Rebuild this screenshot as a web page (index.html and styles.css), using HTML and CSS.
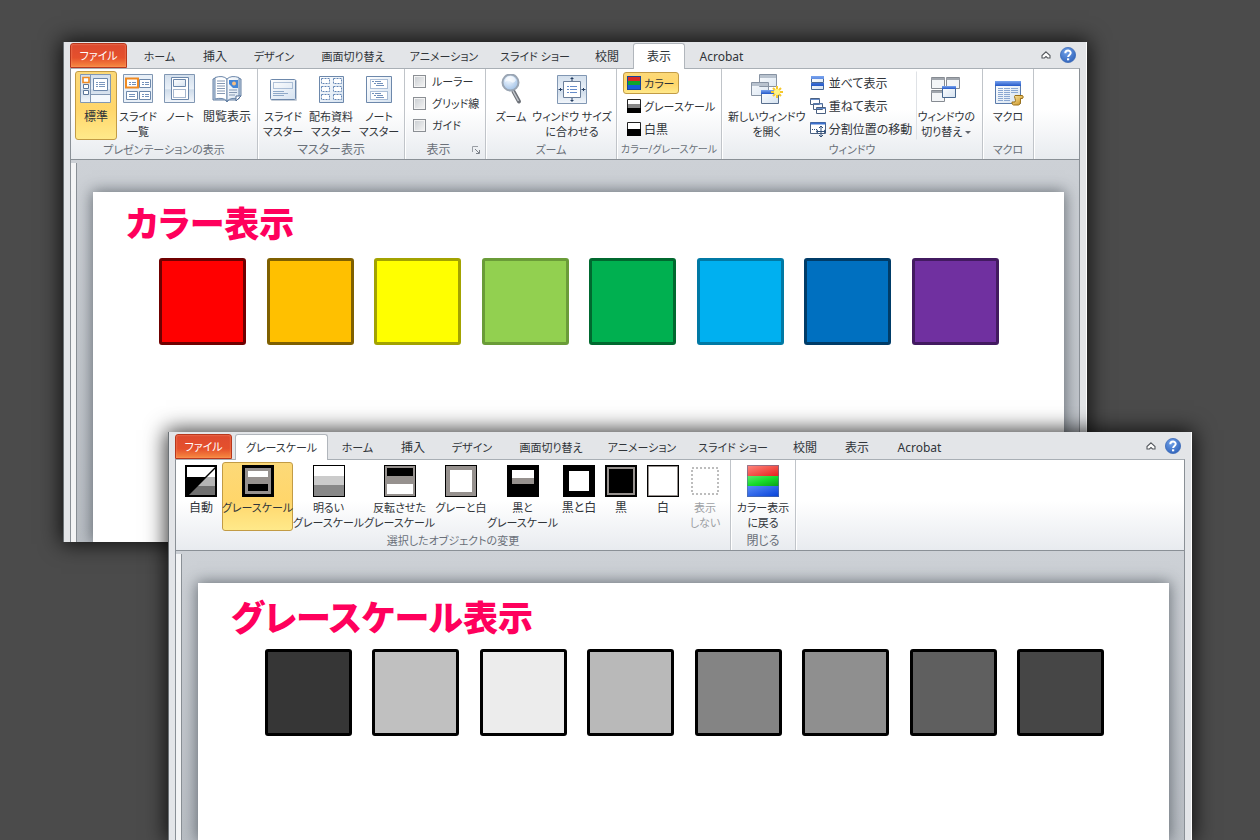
FILE: index.html
```html
<!DOCTYPE html>
<html lang="ja">
<head>
<meta charset="utf-8">
<title>カラー表示とグレースケール表示</title>
<link rel="stylesheet" href="styles.css">
</head>
<body>
<svg class="defs" aria-hidden="true">
  <defs>
    <linearGradient id="pane" x1="0" y1="0" x2="0" y2="1"><stop offset="0" stop-color="#d3dfec"/><stop offset=".5" stop-color="#e9f0f8"/><stop offset=".55" stop-color="#cfdcea"/><stop offset="1" stop-color="#f2f6fb"/></linearGradient>
    <linearGradient id="paper" x1="0" y1="0" x2="1" y2="1"><stop offset="0" stop-color="#fff"/><stop offset="1" stop-color="#d5e2f0"/></linearGradient>
    <linearGradient id="bar" x1="0" y1="0" x2="0" y2="1"><stop offset="0" stop-color="#79a3ee"/><stop offset="1" stop-color="#2358c8"/></linearGradient>
    <linearGradient id="r" x1="0" y1="0" x2="1" y2="1"><stop offset="0" stop-color="#ff8a80"/><stop offset="1" stop-color="#e8201c"/></linearGradient>
    <linearGradient id="g" x1="0" y1="0" x2="1" y2="1"><stop offset="0" stop-color="#5fe870"/><stop offset=".5" stop-color="#18dc2c"/><stop offset="1" stop-color="#0aa018"/></linearGradient>
    <linearGradient id="b" x1="0" y1="0" x2="1" y2="1"><stop offset="0" stop-color="#5a8cf8"/><stop offset="1" stop-color="#0440d8"/></linearGradient>
    <linearGradient id="gold" x1="0" y1="0" x2="1" y2="1"><stop offset="0" stop-color="#fbe9a8"/><stop offset="1" stop-color="#c98f1c"/></linearGradient>
    <radialGradient id="lens" cx=".4" cy=".35" r=".7"><stop offset="0" stop-color="#f2f8ff"/><stop offset="1" stop-color="#9dbfe6"/></radialGradient>
    <radialGradient id="ball" cx=".4" cy=".3" r=".8"><stop offset="0" stop-color="#6fa0e8"/><stop offset="1" stop-color="#2c5fb8"/></radialGradient>
    <symbol id="help" viewBox="0 0 16 16"><circle cx="8" cy="8" r="7.6" fill="url(#ball)" stroke="#3e6cb8" stroke-width=".8"/><path d="M5.3 6.2C5.3 2.6 10.8 2.8 10.7 6 10.6 7.9 8.1 8 8.1 10" fill="none" stroke="#fff" stroke-width="2"/><path d="M7 11.3h2.2v2H7z" fill="#fff"/></symbol>
    <symbol id="collapse" viewBox="0 0 10 8"><path d="M5 .8 9 4.5V7H6.6L5 5.5 3.4 7H1V4.5z" fill="#fff" stroke="#55595e" stroke-width="1.1"/></symbol>
  </defs>
</svg>
<main class="desktop">
  <section class="window window-color" aria-label="カラー表示">
    <header class="tabbar">
      <nav class="tabs">
        <button class="tab kana file">ファイル</button>
        <button class="tab kana w-home">ホーム</button>
        <button class="tab w-short">挿入</button>
        <button class="tab kana w-design">デザイン</button>
        <button class="tab kana w-long">画面切り替え</button>
        <button class="tab kana w-anim">アニメーション</button>
        <button class="tab kana w-long">スライド ショー</button>
        <button class="tab w-short">校閲</button>
        <button class="tab w-short active">表示</button>
        <button class="tab w-acro">Acrobat</button>
      </nav>
      <div class="tools">
        <button class="tool" aria-label="リボンの最小化"><svg width="10" height="8"><use href="#collapse"/></svg></button>
        <button class="tool" aria-label="ヘルプ"><svg width="16" height="16"><use href="#help"/></svg></button>
      </div>
    </header>
    <div class="ribbon">
      <div class="group g-pres">
        <div class="body">
          <button class="big b-42 on">
            <svg width="32" height="32" viewBox="0 0 32 32"><path d="M.5.5h30v28H.5z" fill="url(#pane)" stroke="#8197b3"/><path d="M10.500 1v28M10.500 20.500H31" stroke="#8197b3"/><path d="M11 21h19v7H11z" fill="#f4f8fc"/><path d="M13.500 4.500h14v12h-14z" fill="#fff" stroke="#6d88ab"/><path d="M16 8.500h2M19 8.500h6M16 10.500h2M19 10.500h6M16 12.500h2M19 12.500h6" stroke="#7c98be"/><path d="M3 3.500h6v5H3z" fill="#fff" stroke="#ef8a22" stroke-width="1.600"/><path d="M3.500 10.500h5v4h-5zM3.500 16.500h5v4h-5z" fill="#fff" stroke="#5d7698"/></svg>
            <span>標準</span></button>
          <button class="big b-42">
            <svg width="32" height="32" viewBox="0 0 32 32"><path d="M1.500.500h29v28h-29z" fill="#e9f0f8" stroke="#8197b3"/><path d="M17.500 5.500h11v8h-11zM4.500 17.500h11v8h-11zM17.500 17.500h11v8h-11z" fill="#fff" stroke="#6d88ab"/><path d="M4 4.500h12v9H4z" fill="#fff" stroke="#ef8a22" stroke-width="2"/><path d="M7 8.500h2M10 8.500h4M7 10.500h2M10 10.500h4M20 8.500h2M23 8.500h4M20 10.500h2M23 10.500h4M7 20.500h6M7 22.500h6M20 20.500h2M23 20.500h4M20 22.500h2M23 22.500h4" stroke="#7391bb"/></svg>
            <span class="kana">スライド<br>一覧</span></button>
          <button class="big b-42">
            <svg width="32" height="32" viewBox="0 0 32 32"><path d="M.5.500h30v28H.5z" fill="url(#pane)" stroke="#8197b3"/><path d="M7.500 3.500h17v22h-17z" fill="#fff" stroke="#6d88ab"/><path d="M9.500 5.500h12v7h-12z" fill="url(#paper)" stroke="#6d88ab"/><path d="M9.500 15.500h12v8h-12z" fill="none" stroke="#4c6f9d" stroke-dasharray="1 1"/></svg>
            <span class="kana">ノート</span></button>
          <button class="big b-52">
            <svg width="32" height="32" viewBox="0 0 32 32"><path d="M2 5v21h12l2 2 2-2h8l4-4V5l-3-1H18l-2 2-2-2H5z" fill="#c1d1e4" stroke="#6680a2"/><path d="M4 3.500Q12 1 16 5v22Q12 23 4 25z" fill="#fff" stroke="#6d88ab"/><path d="M28 3.500Q20 1 16 5v22Q20 23 28 25z" fill="url(#paper)" stroke="#6d88ab"/><path d="M6 7h8M6 9.500h8M6 12h8M6 14.500h8M6 17h8M6 19.500h8M18 16h8M18 18.500h8M18 21h6" stroke="#8598b3"/><path d="M18 6h9v8h-9z" fill="#4385d6"/><circle cx="23" cy="9.500" r="2" fill="#f5be83"/><path d="M18 14v-4l4 4z" fill="#e7f2fb"/><path d="M25 27v-5h5z" fill="#fff" stroke="#536f96"/></svg>
            <span>閲覧表示</span></button>
        </div>
        <h3 class="kana">プレゼンテーションの表示</h3>
      </div>
      <div class="group g-master">
        <div class="body">
          <button class="big b-48">
            <svg width="32" height="32" viewBox="0 0 32 32"><rect x="4" y="6" width="26" height="21" rx="1" fill="#c6ced8"/><rect x="3.500" y="5.500" width="25" height="20" rx="1" fill="url(#paper)" stroke="#6d88ab"/><path d="M6.500 8.500h19v6h-19z" fill="none" stroke="#6a8ab5" stroke-dasharray="1 1"/><path d="M6 17.500h11M6 19.500h15M6 21.500h11" stroke="#8fa9c8"/></svg>
            <span class="kana">スライド<br>マスター</span></button>
          <button class="big b-48">
            <svg width="32" height="32" viewBox="0 0 32 32"><path d="M4.500 2.500h24v26h-24z" fill="url(#paper)" stroke="#6d88ab"/><path d="M6.500 4.500h8v5h-8zM18.500 4.500h8v5h-8zM6.500 12.500h8v5h-8zM18.500 12.500h8v5h-8zM6.500 20.500h8v5h-8zM18.500 20.500h8v5h-8z" fill="#fff" stroke="#6486b5" stroke-dasharray="2 1"/></svg>
            <span class="kana">配布資料<br>マスター</span></button>
          <button class="big b-48">
            <svg width="32" height="32" viewBox="0 0 32 32"><path d="M3.500 2.500h25v26h-25z" fill="url(#paper)" stroke="#6d88ab"/><path d="M7.500 5.500h17v9h-17zM7.500 17.500h17v8h-17z" fill="#fff" stroke="#6486b5" stroke-dasharray="1 1"/><path d="M9 7.500h2M12 7.500h6M11 9.500h2M14 9.500h6M13 11.500h8M9 19.500h2M12 19.500h6M11 21.500h2M14 21.500h6M13 23.500h8" stroke="#7391bb"/></svg>
            <span class="kana">ノート<br>マスター</span></button>
        </div>
        <h3>マスター表示</h3>
      </div>
      <div class="group g-show">
        <div class="body checks">
          <label class="kana"><input type="checkbox">ルーラー</label>
          <label class="kana"><input type="checkbox">グリッド線</label>
          <label class="kana"><input type="checkbox">ガイド</label>
        </div>
        <div class="foot"><h3>表示</h3>
          <button class="tool" aria-label="表示のオプション"><svg width="8" height="8" viewBox="0 0 8 8"><path d="M.5 6V.5H6" fill="none" stroke="#9a9ea5"/><path d="M3 3l4 4M7.500 4v3.500H4" fill="none" stroke="#7b8088"/></svg></button></div>
      </div>
      <div class="group g-zoom">
        <div class="body">
          <button class="big b-42">
            <svg width="32" height="32" viewBox="0 0 32 32"><path d="M18.500 17.500l5.500 10" stroke="#6d7178" stroke-width="4" stroke-linecap="round"/><path d="M18 17l5.500 10" stroke="#c2c6cc" stroke-width="1.500"/><circle cx="15.500" cy="8.500" r="8" fill="url(#lens)" stroke="#9aa5b3" stroke-width="2"/><path d="M10 8q4-3 6 0 3 2 5-2-2-4-6-4-5 1-5 6z" fill="#fff" opacity=".65"/></svg>
            <span class="kana">ズーム</span></button>
          <button class="big b-80">
            <svg width="32" height="32" viewBox="0 0 32 32"><path d="M1.500 1.500h29v28h-29z" fill="url(#pane)" stroke="#8197b3"/><path d="M7.500 7.500h17v16h-17z" fill="#fff" stroke="#6b7f9a"/><path d="M11 12.500h2M14 12.500h7M11 15.500h2M14 15.500h7M11 18.500h2M14 18.500h7" stroke="#668cca"/><path d="M16 3v4M14.500 4.500h3M16 24v4M14.500 26.500h3M2.500 15.500h4M4.500 14v3M25.500 15.500h4M27.500 14v3" stroke="#263f62"/></svg>
            <span class="kana">ウィンドウ サイズ<br>に合わせる</span></button>
        </div>
        <h3 class="kana">ズーム</h3>
      </div>
      <div class="group g-color">
        <div class="body list">
          <button class="small kana on"><svg width="14" height="14"><path d="M0 0h14v14H0z" fill="#16459b"/><path d="M1 1h12v4H1z" fill="#d92b25"/><path d="M1 5h12v4H1z" fill="#10a52d"/><path d="M1 9h12v4H1z" fill="#165dda"/></svg>カラー</button>
          <button class="small kana"><svg width="14" height="14"><path d="M.5.500h13v13H.5z" fill="#fff" stroke="#222"/><path d="M1 5h12v4H1z" fill="#888"/><path d="M0 9h14v5H0z"/></svg>グレースケール</button>
          <button class="small"><svg width="14" height="14"><path d="M.5.500h13v13H.5z" fill="#fff" stroke="#222"/><path d="M0 7h14v7H0z"/></svg>白黒</button>
        </div>
        <h3 class="tight">カラー/グレースケール</h3>
      </div>
      <div class="group g-window">
        <div class="body">
          <button class="big b-78">
            <svg width="32" height="32" viewBox="0 0 32 32"><path d="M8.500.500h17v12h-17zM.5 8.500h17v13H.5z" fill="url(#paper)" stroke="#8793a3"/><path d="M9 1h16v3H9zM1 9h16v3H1z" fill="#b8c2ce"/><path d="M10.500 16.500h17v13h-17z" fill="url(#paper)" stroke="#596f8e"/><path d="M10 16h18v4H10z" fill="url(#bar)"/><path d="M26 12v12M20 18h12M22 14l8 8M30 14l-8 8" stroke="#f5c82c" stroke-width="2"/><circle cx="26" cy="18" r="3" fill="#fff48a"/></svg>
            <span class="kana">新しいウィンドウ<br>を開く</span></button>
          <div class="list">
            <button class="small"><svg width="16" height="16"><path d="M1.500 1.500h12v6h-12zM1.500 8.500h12v6h-12z" fill="url(#paper)" stroke="#496894"/><path d="M1 1h13v3H1zM1 8h13v3H1z" fill="url(#bar)"/></svg>並べて表示</button>
            <button class="small"><svg width="16" height="16"><path d="M.5.500h9v6h-9zM3.500 5.500h9v6h-9zM6.500 9.500h9v6h-9z" fill="#fff" stroke="#4a6081"/><path d="M.5 1.500h9M3.500 6h9M6.500 10.500h9" stroke="#668ecd"/></svg>重ねて表示</button>
            <button class="small"><svg width="16" height="16"><path d="M.5 1.500h15v11H.5z" fill="#fff" stroke="#4a6081"/><path d="M.5 2.500h15" stroke="#3b70cf" stroke-width="2"/><path d="M2 8.500h6" stroke="#304f78" stroke-dasharray="1 1"/><path d="M11 5v11M7 10.500h9M9 7l2-2 2 2M9 14l2 2 2-2M8 9l-2 1.500L8 12M14 9l2 1.500-2 1.500" fill="none" stroke="#304f78"/></svg>分割位置の移動</button>
          </div>
          <button class="big b-60 split">
            <svg width="32" height="32" viewBox="0 0 32 32"><path d="M1.500 3.500h13v11h-13zM16.500 3.500h13v11h-13zM1.500 16.500h13v11h-13z" fill="#f3f5f7" stroke="#868b92"/><path d="M1.500 5h13M16.500 5h13M1.500 18h13" stroke="#a1a6ad" stroke-width="2"/><path d="M12.500 12.500h13v11h-13z" fill="url(#paper)" stroke="#48688f"/><path d="M12 12h14v3H12z" fill="url(#bar)"/></svg>
            <span class="kana">ウィンドウの<br>切り替え<i class="caret"></i></span></button>
        </div>
        <h3 class="kana">ウィンドウ</h3>
      </div>
      <div class="group g-macro">
        <div class="body">
          <button class="big b-48">
            <svg width="32" height="32" viewBox="0 0 32 32"><path d="M3.500 7.500h25v22h-25z" fill="url(#paper)" stroke="#5a7bab"/><path d="M3 7h26v5H3z" fill="url(#bar)"/><path d="M6 14.500h5M12 14.500h6M19 14.500h7M6 16.500h5M12 16.500h6M19 16.500h7M6 18.500h5M12 18.500h6M19 18.500h7M6 20.500h5M12 20.500h6M6 22.500h5M12 22.500h6M6 24.500h5M12 24.500h6M6 26.500h5M12 26.500h6" stroke="#8ba8d2"/><path d="M23 21.500h7.500q1.500 1.500 0 3H28.500v2.500q.5 3.500-2 4h-5q-2-.5-1.500-3h3q1-1.500 0-3.500-1-2.500 0-3z" fill="url(#gold)" stroke="#9a7018"/></svg>
            <span class="kana">マクロ</span></button>
        </div>
        <h3 class="kana">マクロ</h3>
      </div>
    </div>
    <div class="workspace">
      <article class="slide">
        <h2>カラー表示</h2>
        <div class="swatches">
          <div class="swatch red"></div><div class="swatch orange"></div><div class="swatch yellow"></div><div class="swatch lime"></div><div class="swatch green"></div><div class="swatch sky"></div><div class="swatch blue"></div><div class="swatch purple"></div>
        </div>
      </article>
    </div>
  </section>

  <section class="window window-gray" aria-label="グレースケール表示">
    <header class="tabbar">
      <nav class="tabs">
        <button class="tab kana file">ファイル</button>
        <button class="tab kana w-gray active">グレースケール</button>
        <button class="tab kana w-home">ホーム</button>
        <button class="tab w-short">挿入</button>
        <button class="tab kana w-design">デザイン</button>
        <button class="tab kana w-long">画面切り替え</button>
        <button class="tab kana w-anim">アニメーション</button>
        <button class="tab kana w-long">スライド ショー</button>
        <button class="tab w-short">校閲</button>
        <button class="tab w-short">表示</button>
        <button class="tab w-acro">Acrobat</button>
      </nav>
      <div class="tools">
        <button class="tool" aria-label="リボンの最小化"><svg width="10" height="8"><use href="#collapse"/></svg></button>
        <button class="tool" aria-label="ヘルプ"><svg width="16" height="16"><use href="#help"/></svg></button>
      </div>
    </header>
    <div class="ribbon">
      <div class="group g-change">
        <div class="body">
          <button class="big b-42"><svg width="32" height="32"><path d="M0 0h32v32H0z"/><path d="M2 2h28L20 12H2z" fill="#fff"/><path d="M30 4v8h-8z" fill="#fff"/><path d="M22 12h8v9H13z" fill="#b5b5b5"/><path d="M13 21h17v9H4z" fill="#707070"/></svg><span>自動</span></button>
          <button class="big b-71 on"><svg width="32" height="32"><path d="M0 0h32v32H0z"/><path d="M3 3h26v26H3z" fill="#96918e"/><path d="M6 6h20v6H6z" fill="#fff"/><path d="M6 19h20v7H6z"/></svg><span class="kana">グレースケール</span></button>
          <button class="big b-71"><svg width="32" height="32"><path d="M0 0h32v32H0z"/><path d="M1 1h30v10H1z" fill="#fff"/><path d="M1 11h30v9H1z" fill="#cbcbcb"/><path d="M1 20h30v11H1z" fill="#888"/></svg><span class="kana">明るい<br>グレースケール</span></button>
          <button class="big b-71"><svg width="32" height="32"><path d="M0 0h32v32H0z"/><path d="M1 1h30v30H1z" fill="#96918e"/><path d="M3 3h26v8H3z"/><path d="M3 19h26v10H3z" fill="#fff"/></svg><span class="kana">反転させた<br>グレースケール</span></button>
          <button class="big b-52"><svg width="32" height="32"><path d="M0 0h32v32H0z"/><path d="M1 1h30v30H1z" fill="#96918e"/><path d="M5 5h22v22H5z" fill="#fff"/></svg><span class="kana">グレーと白</span></button>
          <button class="big b-71"><svg width="32" height="32"><path d="M0 0h32v32H0z"/><path d="M5 5h22v8H5z" fill="#fff"/><path d="M5 13h22v6H5z" fill="#96918e"/></svg><span class="kana">黒と<br>グレースケール</span></button>
          <button class="big b-42"><svg width="32" height="32"><path d="M0 0h32v32H0z"/><path d="M6 6h20v20H6z" fill="#fff"/></svg><span>黒と白</span></button>
          <button class="big b-42"><svg width="32" height="32"><path d="M0 0h32v32H0z"/><path d="M3 3h26v26H3z" fill="none" stroke="#96918e" stroke-width="2"/></svg><span>黒</span></button>
          <button class="big b-42"><svg width="32" height="32"><path d="M0 0h32v32H0z"/><path d="M1.500 1.500h29v29h-29z" fill="#fff" stroke="#96918e"/></svg><span>白</span></button>
          <button class="big b-42" disabled><svg width="32" height="32"><path d="M3 3h26v26H3z" fill="#fff" stroke="#bdbdbd" stroke-width="2" stroke-dasharray="2"/></svg><span class="kana">表示<br>しない</span></button>
        </div>
        <h3 class="kana">選択したオブジェクトの変更</h3>
      </div>
      <div class="group g-close">
        <div class="body">
          <button class="big b-60"><svg width="32" height="32"><path d="M0 0h32v11H0z" fill="url(#r)"/><path d="M0 11h32v10H0z" fill="url(#g)"/><path d="M0 21h32v11H0z" fill="url(#b)"/><path d="M.5.500h31v31H.5z" fill="none" stroke="#576e97" opacity=".6"/></svg><span class="kana">カラー表示<br>に戻る</span></button>
        </div>
        <h3>閉じる</h3>
      </div>
    </div>
    <div class="workspace">
      <article class="slide">
        <h2>グレースケール表示</h2>
        <div class="swatches">
          <div class="swatch k1"></div><div class="swatch k2"></div><div class="swatch k3"></div><div class="swatch k4"></div><div class="swatch k5"></div><div class="swatch k6"></div><div class="swatch k7"></div><div class="swatch k8"></div>
        </div>
      </article>
    </div>
  </section>
</main>
</body>
</html>
```
FILE: styles.css
```css
* { box-sizing: border-box; }
body {
  margin: 0;
  background: #4b4b4b;
  color: #303439;
  font: 12px/15px "Noto Sans", "Noto Sans CJK JP", sans-serif;
  font-feature-settings: "palt";
}
button { font: inherit; font-feature-settings: inherit; color: inherit; background: none; border: 0; padding: 0; }
h2, h3 { margin: 0; }
svg { display: block; flex: none; }
.defs { position: absolute; width: 0; height: 0; }

.desktop { position: relative; height: 100vh; overflow: hidden; }
.window {
  position: absolute;
  display: flex;
  flex-direction: column;
  padding: 0 6px;
  background: #e3e5e8;
  border-left: 1px solid #6c7276;
  border-right: 1px solid #fff;
  box-shadow: 0 0 20px 2px rgba(0, 0, 0, .8);
}
.window-color { top: 42px; left: 63px; right: 173px; height: 500px; }
.window-gray { top: 432px; left: 168px; right: 68px; bottom: 0; }

.tabbar { display: flex; justify-content: space-between; height: 27px; }
.window-color .tabbar { height: 26px; }
.tabs { display: flex; align-items: flex-end; }
.tab { height: 25px; white-space: nowrap; border: 1px solid transparent; border-bottom: 0; flex: none; }
.tab.active { background: #fff; border-color: #b1b6bc; border-radius: 3px 3px 0 0; height: 26px; margin-bottom: -1px; position: relative; z-index: 1; }
.tab.file {
  width: 57px;
  margin-right: 3px;
  color: #fff;
  border: 1px solid #b7371c;
  border-radius: 3px 3px 0 0;
  background: linear-gradient(#dd4a30, #e5502c 60%, #f78a40);
  box-shadow: inset 0 0 2px #ff9b78;
}
.w-home { width: 59px; }
.w-short { width: 52px; }
.w-design { width: 66px; }
.w-long { width: 92px; }
.w-anim { width: 90px; }
.w-acro { width: 73px; }
.w-gray { width: 93px; }
.tools { display: flex; align-items: center; gap: 9px; padding-right: 4px; }

.ribbon {
  display: flex;
  height: 92px;
  flex: none;
  border: 1px solid #8a9096;
  border-top-color: #a9afb5;
  background: linear-gradient(#fff 45%, #e8ebef);
}
.group { display: flex; flex-direction: column; flex: none; border-right: 1px solid #c0c4c9; box-shadow: 1px 0 #fff; }
.group h3 { font-size: 12px; font-weight: 400; line-height: 19px; color: #6a7079; text-align: center; white-space: nowrap; }
.kana, .group h3.kana { font-size: 11px; }
.group h3.tight { font-size: 10px; }
.body { display: flex; justify-content: center; height: 71px; padding-top: 2px; }
.g-pres { width: 187px; }
.g-master { width: 147px; }
.g-show { width: 81px; }
.g-zoom { width: 131px; }
.g-color { width: 105px; }
.g-window { width: 261px; }
.g-macro { width: 51px; }
.g-change { width: 555px; }
.g-close { width: 65px; }

.big {
  display: flex;
  flex-direction: column;
  align-items: center;
  flex: none;
  gap: 3px;
  height: 69px;
  padding-top: 2px;
  border: 1px solid transparent;
  white-space: nowrap;
}
.on { border: 1px solid #c29b45; border-radius: 3px; background: linear-gradient(#fcd978, #ffd66b 55%, #ffe98a); }
.big:disabled { color: #9da0a4; }
.b-42 { width: 42px; }
.b-48 { width: 48px; }
.b-52 { width: 52px; }
.b-60 { width: 60px; }
.b-71 { width: 71px; }
.b-78 { width: 78px; }
.b-80 { width: 80px; }
.split { border-left: 1px solid #dfe2e6; }
.caret { display: inline-block; margin: 0 0 2px 3px; border: 3px solid transparent; border-top-color: #60656c; border-bottom: 0; }

.checks { flex-direction: column; justify-content: flex-start; padding: 1px 0 0 8px; }
.checks label { display: flex; align-items: center; gap: 6px; height: 22px; white-space: nowrap; }
.checks input { appearance: none; width: 13px; height: 13px; margin: 0; border: 1px solid #8b8f94; background: linear-gradient(135deg, #c9cdd1, #f5f5f5); box-shadow: inset 0 0 0 1px #f4f4f4; }
.foot { display: flex; align-items: center; }
.foot h3 { flex: 1; padding-left: 0; }
.foot .tool { padding-right: 5px; }
.list { display: flex; flex-direction: column; align-items: flex-start; justify-content: flex-start; gap: 1px; }
.body.list { padding: 3px 0 0 6px; }
.body .list { padding-top: 1px; }
.small { display: flex; align-items: center; gap: 3px; height: 22px; padding: 0 3px; white-space: nowrap; border: 1px solid transparent; }
.small.on { border-color: #c29b45; }

.workspace {
  flex: 1;
  min-height: 0;
  display: flex;
  padding: 32px 15px 0 22px;
  overflow: hidden;
  border: solid #8a9096;
  border-width: 0 1px;
  background:
    linear-gradient(90deg, #f4f5f6 5px, #8a9096 5px, #8a9096 6px, transparent 6px) 0 3px no-repeat,
    linear-gradient(#cdd1d6, #b9bec4);
}
.slide { flex: 1; min-width: 0; background: #fff; box-shadow: 0 0 14px 1px rgba(40, 48, 56, .6); }
.slide h2 { height: 66px; padding-left: 33px; font-size: 35px; font-weight: 900; line-height: 64px; color: #ff005c; white-space: nowrap; }
.window-gray .slide h2 { line-height: 70px; }
.swatches { display: flex; justify-content: space-between; padding: 0 65px 0 66px; }
.window-gray .swatches { padding-left: 67px; }
.swatch { flex: 0 1 87px; aspect-ratio: 1; border: 3px solid #000; border-radius: 3px; }
.red { background: #f00; border-color: #700000; }
.orange { background: #ffc000; border-color: #7f6000; }
.yellow { background: #ff0; border-color: #a3a300; }
.lime { background: #92d050; border-color: #6a9c38; }
.green { background: #00b050; border-color: #00692f; }
.sky { background: #00b0f0; border-color: #0079a5; }
.blue { background: #0070c0; border-color: #003c68; }
.purple { background: #7030a0; border-color: #421a60; }
.k1 { background: #363636; }
.k2 { background: #c0c0c0; }
.k3 { background: #ececec; }
.k4 { background: #b9b9b9; }
.k5 { background: #848484; }
.k6 { background: #8f8f8f; }
.k7 { background: #5f5f5f; }
.k8 { background: #464646; }
```
